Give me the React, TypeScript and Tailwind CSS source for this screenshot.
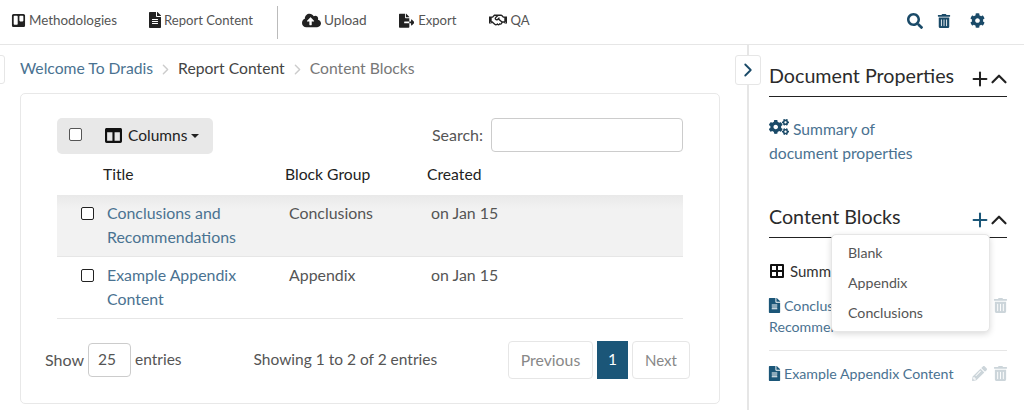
import React from "react";
import {
  FaTrello, FaFileAlt, FaCloudUploadAlt, FaFileExport, FaRegHandshake, FaSearch, FaTrashAlt, FaCog, FaCogs,
  FaColumns, FaBorderAll, FaPencilAlt,
} from "react-icons/fa";
import { Plus, ChevronUp, ChevronRight } from "lucide-react";

function NavItem({ icon, label, cls }: { icon: React.ReactNode; label: string; cls: string }) {
  return (
    <span className={`flex items-center text-[#555] ${cls}`}>
      <span className="text-[#222]">{icon}</span>
      {label}
    </span>
  );
}

function Check() {
  return <span className="block h-[13px] w-[13px] rounded-[2px] border border-[#222] bg-white" />;
}

function Row({ a, b, c, extra }: { a: React.ReactNode; b: string; c: string; extra: string }) {
  return (
    <div className={`grid h-[62px] grid-cols-[46px_182px_142px_1fr] border-b border-[#e6e6e6] pt-[6px] text-[15.9px] leading-6 ${extra}`}>
      <span className="ml-[24px] mt-[6px]"><Check /></span>
      <a className="pl-1 text-[#4a7291]">{a}</a>
      <span className="pl-1">{b}</span>
      <span className="pl-1">{c}</span>
    </div>
  );
}

function SectionHead({ title, plus }: { title: string; plus: string }) {
  return (
    <div className="flex h-[40px] items-center justify-between border-b border-[#222] pb-[2px] text-[19.7px] text-[#2b2b2b]">
      <span>{title}</span>
      <span className="mr-[-5px] mt-[6px] flex items-center">
        <Plus size={22} strokeWidth={2.2} className={plus} />
        <ChevronUp size={26} strokeWidth={2} className="-ml-[5px] -my-1 text-[#222]" />
      </span>
    </div>
  );
}

function RowActions() {
  return (
    <span className="mr-[-1px] mt-[3px] flex gap-[6px] text-[15px] text-[#ccd5da]">
      <FaPencilAlt />
      <FaTrashAlt />
    </span>
  );
}

export default function App() {
  return (
    <div className="flex h-[410px] w-[1024px] flex-col overflow-hidden bg-white font-['Lato','Open_Sans',sans-serif] text-[15px] text-[#555]">
      <header className="flex h-[45px] shrink-0 items-center border-b border-[#e6e6e6] pb-[3px] pl-[11px] pr-[39px]">
        <div className="flex items-center gap-[30px]">
          <NavItem cls="gap-[3px] text-[13.4px]" icon={<FaTrello className="text-[15px]" />} label="Methodologies" />
          <NavItem cls="gap-[1px] text-[13.1px]" icon={<FaFileAlt className="text-[16px]" />} label="Report Content" />
        </div>
        <span className="ml-[24px] mr-[24px] mt-[3px] h-[33px] w-px bg-[#bbb]" />
        <div className="flex items-center gap-[32px]">
          <NavItem cls="gap-[3px] text-[13.6px]" icon={<FaCloudUploadAlt className="text-[19px]" />} label="Upload" />
          <NavItem cls="gap-[4px] text-[13.1px]" icon={<FaFileExport className="text-[15.5px]" />} label="Export" />
          <NavItem cls="gap-[4px] text-[13.1px]" icon={<FaRegHandshake className="text-[18px]" />} label="QA" />
        </div>
        <div className="ml-auto flex items-center gap-[14px] text-[#1a4a68]">
          <FaSearch className="text-[16px]" />
          <FaTrashAlt className="text-[14px]" />
          <FaCog className="ml-[5px] text-[15px]" />
        </div>
      </header>

      <div className="flex min-h-0 flex-1">
        <main className="w-[747px] shrink-0 pl-5">
          <div className="relative flex h-[48px] items-center gap-[4px] text-[15.7px]">
            <span className="absolute left-[-26px] top-[10px] h-[29px] w-[11px] rounded-[3px] border border-[#e6e6e6]" />
            <a className="text-[#4a7291]">Welcome To Dradis</a>
            <ChevronRight size={17} strokeWidth={2} className="text-[#ccc]" />
            <span className="text-[#444]">Report Content</span>
            <ChevronRight size={17} strokeWidth={2} className="text-[#ccc]" />
            <span className="text-[#777]">Content Blocks</span>
          </div>

          <section className="h-[311px] w-[700px] rounded-[5px] border border-[#e8e8e8] pt-6">
            <div className="ml-[36px] mr-[36px] flex items-start justify-between">
              <div className="flex h-[36px] w-[156px] items-center rounded-[5px] bg-[#e8e8e8] pb-[1px] pl-3 text-[15.5px] text-[#222]">
                <span className="mb-[2px] block h-[13px] w-[13px] rounded-[2px] border border-[#555] bg-white" />
                <FaColumns className="ml-[23px] text-[17px] text-[#111]" />
                <span className="ml-[6px]">Columns</span>
                <span className="ml-[4px] border-x-[4px] border-t-[4px] border-x-transparent border-t-[#222]" />
              </div>
              <label className="flex items-center gap-2 text-[16px]">
                Search:
                <span className="block h-[34px] w-[192px] rounded-[4px] border border-[#ccc]" />
              </label>
            </div>

            <div className="ml-[36px] mr-[36px]">
              <div className="grid h-[41px] grid-cols-[46px_182px_142px_1fr] items-center text-[15.7px] text-[#222]">
                <span />
                <span>Title</span>
                <span>Block Group</span>
                <span>Created</span>
              </div>
              <Row a={<>Conclusions and<br />Recommendations</>} b="Conclusions" c="on Jan 15" extra="bg-[linear-gradient(#e9e9e9,#f2f2f2_14px)]" />
              <Row a={<>Example Appendix<br />Content</>} b="Appendix" c="on Jan 15" extra="" />
            </div>

            <div className="mt-[22px] flex items-center pl-[24px] pr-[29px] text-[15.5px]">
              <span className="text-[16px]">Show</span>
              <span className="mx-[4px] flex h-[34px] w-[43px] items-center rounded-[4px] border border-[#ccc] pl-[9px]">25</span>
              <span>entries</span>
              <span className="ml-[72px]">Showing 1 to 2 of 2 entries</span>
              <div className="ml-auto flex h-[38px] gap-1 text-[#888]">
                <span className="flex w-[85px] items-center justify-center rounded-[4px] border border-[#e6e6e6] text-[15.8px]">Previous</span>
                <span className="flex w-[31px] items-center justify-center bg-[#1b5678] text-white">1</span>
                <span className="flex w-[58px] items-center justify-center rounded-[4px] border border-[#e6e6e6] text-[15px]">Next</span>
              </div>
            </div>
          </section>
        </main>

        <aside className="relative min-w-0 flex-1 border-l-2 border-[#e6e6e6] pl-5 pr-[17px] pt-[12px]">
          <span className="absolute left-[-14px] top-[10px] flex h-[30px] w-[26px] items-center justify-center rounded-[3px] border border-[#e6e6e6] bg-white text-[#1a4a68]">
            <ChevronRight size={22} strokeWidth={2} />
          </span>

          <SectionHead title="Document Properties" plus="text-[#222]" />
          <p className="mt-[20px] text-[15.65px] leading-6 text-[#4a7291]">
            <FaCogs className="mr-[4px] inline-block align-[-2px] text-[20px] text-[#1a4a68]" />
            Summary of<br />document properties
          </p>

          <div className="mt-[33px]">
            <SectionHead title="Content Blocks" plus="text-[#1b5678]" />
          </div>
          <div className="mt-[22px] flex items-center gap-[5px] text-[#333]">
            <FaBorderAll className="text-[16px] text-[#111]" />
            <span>Summary</span>
          </div>

          <div className="mt-[12px] flex justify-between border-b border-[#e6e6e6] pb-[13px] text-[14.2px] leading-[21px] text-[#4a7291]">
            <p>
              <FaFileAlt className="-ml-[2px] mr-[2px] inline-block align-[-2px] text-[15px] text-[#1b5678]" />
              Conclusions and<br />Recommendations
            </p>
            <RowActions />
          </div>
          <div className="mt-[12px] flex justify-between text-[14.2px] leading-[21px] text-[#4a7291]">
            <p>
              <FaFileAlt className="-ml-[2px] mr-[2px] inline-block align-[-2px] text-[15px] text-[#1b5678]" />
              Example Appendix Content
            </p>
            <RowActions />
          </div>

          <ul className="absolute left-[82px] top-[189px] h-[98px] w-[159px] rounded-[5px] border border-[#e6e6e6] bg-white pl-4 pt-[3px] text-[14.2px] leading-[30px] text-[#555] shadow-[0_2px_6px_rgba(0,0,0,0.15)]">
            <li>Blank</li>
            <li>Appendix</li>
            <li>Conclusions</li>
          </ul>
        </aside>
      </div>
    </div>
  );
}
